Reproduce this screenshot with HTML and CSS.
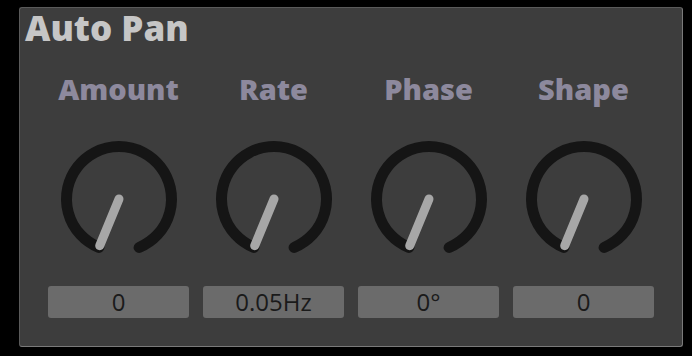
FILE: index.html
```html
<!DOCTYPE html>
<html lang="en">
<head>
<meta charset="utf-8">
<title>Auto Pan</title>
<link rel="stylesheet" href="styles.css">
</head>
<body>
<section class="panel">
  <h1 class="title">Auto Pan</h1>
  <div class="controls">
    <div class="control">
      <div class="label">Amount</div>
      <svg class="knob" viewBox="0 0 120 120" width="120" height="120">
        <path class="ring" d="M39.91 108.5 A52.5 52.5 0 1 1 80.09 108.5"/>
        <line class="pointer" x1="60" y1="60" x2="40.7" y2="106.7"/>
      </svg>
      <div class="value">0</div>
    </div>
    <div class="control">
      <div class="label">Rate</div>
      <svg class="knob" viewBox="0 0 120 120" width="120" height="120">
        <path class="ring" d="M39.91 108.5 A52.5 52.5 0 1 1 80.09 108.5"/>
        <line class="pointer" x1="60" y1="60" x2="40.7" y2="106.7"/>
      </svg>
      <div class="value">0.05Hz</div>
    </div>
    <div class="control">
      <div class="label">Phase</div>
      <svg class="knob" viewBox="0 0 120 120" width="120" height="120">
        <path class="ring" d="M39.91 108.5 A52.5 52.5 0 1 1 80.09 108.5"/>
        <line class="pointer" x1="60" y1="60" x2="40.7" y2="106.7"/>
      </svg>
      <div class="value">0°</div>
    </div>
    <div class="control">
      <div class="label">Shape</div>
      <svg class="knob" viewBox="0 0 120 120" width="120" height="120">
        <path class="ring" d="M39.91 108.5 A52.5 52.5 0 1 1 80.09 108.5"/>
        <line class="pointer" x1="60" y1="60" x2="40.7" y2="106.7"/>
      </svg>
      <div class="value">0</div>
    </div>
  </div>
</section>
</body>
</html>
```
FILE: styles.css
```css
html, body {
  margin: 0;
  padding: 0;
  background: #000;
}

body {
  font-family: "Open Sans", "Liberation Sans", sans-serif;
}

.panel {
  box-sizing: border-box;
  width: 664px;
  margin: 7px 0 0 19px;
  background: #3d3d3d;
  border: 1px solid #5a5a5a;
  border-right-color: #7a7a7a;
  border-bottom-color: #7a7a7a;
  border-radius: 3px;
  padding: 0 0 28px;
}

.title {
  margin: 0 0 0 5px;
  font-size: 35px;
  line-height: 40px;
  font-weight: 800;
  color: #c6c6c6;
}

.controls {
  display: grid;
  grid-template-columns: repeat(4, 155px);
  padding: 0 21px;
  margin-top: 24px;
}

.control {
  display: flex;
  flex-direction: column;
  align-items: center;
}

.label {
  font-size: 29px;
  line-height: 34px;
  font-weight: 800;
  color: #8d899d;
}

.knob {
  display: block;
  margin-top: 33px;
}

.ring {
  fill: none;
  stroke: #151515;
  stroke-width: 11;
  stroke-linecap: round;
}

.pointer {
  stroke: #a7a7a7;
  stroke-width: 9;
  stroke-linecap: round;
}

.value {
  box-sizing: border-box;
  width: 141px;
  height: 32px;
  margin-top: 27px;
  background: #6b6b6b;
  border-radius: 3px;
  text-align: center;
  font-size: 24px;
  line-height: 32px;
  color: #1a1a1a;
}
```
